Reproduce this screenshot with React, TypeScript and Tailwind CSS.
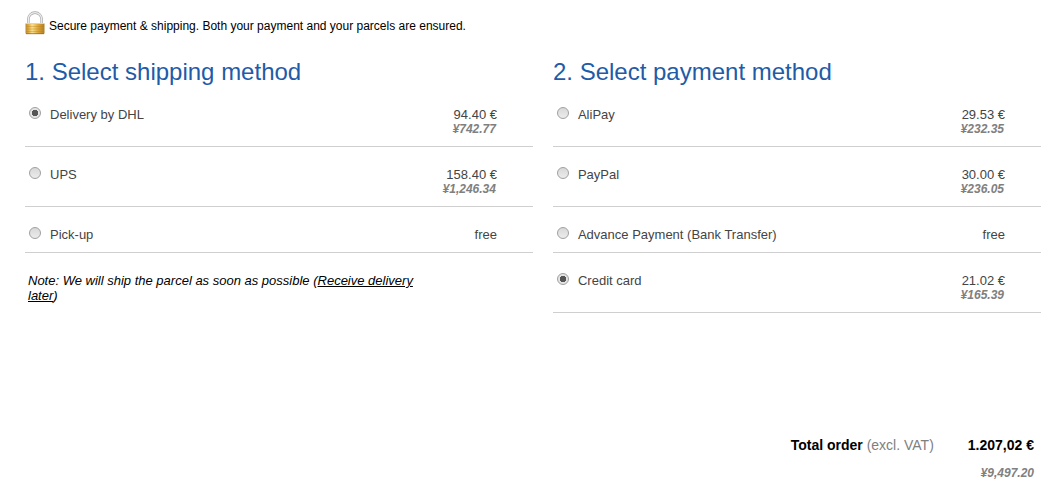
type Option = {
  id: string;
  label: string;
  price: string;
  converted?: string;
};

const shippingOptions: Option[] = [
  { id: "dhl", label: "Delivery by DHL", price: "94.40 €", converted: "¥742.77" },
  { id: "ups", label: "UPS", price: "158.40 €", converted: "¥1,246.34" },
  { id: "pickup", label: "Pick-up", price: "free" },
];

const paymentOptions: Option[] = [
  { id: "alipay", label: "AliPay", price: "29.53 €", converted: "¥232.35" },
  { id: "paypal", label: "PayPal", price: "30.00 €", converted: "¥236.05" },
  { id: "bank", label: "Advance Payment (Bank Transfer)", price: "free" },
  { id: "card", label: "Credit card", price: "21.02 €", converted: "¥165.39" },
];

function LockIcon() {
  return (
    <svg width="20" height="24" viewBox="0 0 20 24" className="shrink-0" aria-hidden="true">
      <defs>
        <linearGradient id="lock-body" x1="0" x2="1" y1="0" y2="0">
          <stop offset="0" stopColor="#b98a3a" />
          <stop offset="0.15" stopColor="#dba83c" />
          <stop offset="0.35" stopColor="#f8e08c" />
          <stop offset="0.65" stopColor="#e0a93a" />
          <stop offset="1" stopColor="#b07c26" />
        </linearGradient>
      </defs>
      <path d="M3.300 13V8.300a6.700 6.700 0 0 1 13.400 0V13" fill="none" stroke="#a6a6a6" strokeWidth="2.600" />
      <path d="M3.300 13V8.300a6.700 6.700 0 0 1 13.400 0V13" fill="none" stroke="#ededed" strokeWidth="1.300" />
      <rect x="0.500" y="12" width="19" height="11" rx="1" fill="url(#lock-body)" />
      <path d="M1 12.500h18" stroke="#f3d684" />
      <path d="M1 15.500h18M1 18h18M1 20.500h18" stroke="#b57b1e" strokeOpacity="0.350" />
      <path d="M1 22.700h18" stroke="#9a6a1c" strokeWidth="0.800" />
    </svg>
  );
}

function OptionList({ name, options, selected }: { name: string; options: Option[]; selected: string }) {
  return (
    <ul>
      {options.map((option) => (
        <li key={option.id} className="flex items-start border-b border-[#cfcfcf] pt-5 pr-9 pb-[10px] pl-1">
          <input
            type="radio"
            id={option.id}
            name={name}
            defaultChecked={option.id === selected}
            className="size-3 shrink-0 appearance-none rounded-full border border-[#a0a0a0] bg-linear-to-b from-[#d8d8d8] to-[#ececec] checked:bg-[radial-gradient(circle,#555_0_3px,#e4e4e4_3px)]"
          />
          <label htmlFor={option.id} className="flex-1 pl-[9px]">
            {option.label}
          </label>
          <div className="text-right">
            <div>{option.price}</div>
            {option.converted && (
              <div className="pr-px text-[12px] leading-[14px] font-bold text-[#808080] italic">{option.converted}</div>
            )}
          </div>
        </li>
      ))}
    </ul>
  );
}

export default function App() {
  return (
    <main className="bg-white pt-[11px] pr-[23px] pl-[25px] font-['Liberation_Sans',Arial,sans-serif] text-[13px] leading-[15px] text-[#444]">
      <div className="flex items-center gap-1 text-[12px] text-black">
        <LockIcon />
        <p className="pt-[6px]">Secure payment &amp; shipping. Both your payment and your parcels are ensured.</p>
      </div>

      <form>
        <div className="grid grid-cols-[51fr_49fr] gap-5 pt-[22px]">
          <section>
            <h2 className="text-[24px] leading-[30px] text-[#1f5ba8]">1. Select shipping method</h2>
            <OptionList name="shipping" options={shippingOptions} selected="dhl" />
            <p className="max-w-[400px] pt-5 pl-[3px] text-black italic">
              Note: We will ship the parcel as soon as possible (
              <a href="#later" className="underline">
                Receive delivery later
              </a>
              )
            </p>
          </section>

          <section>
            <h2 className="text-[24px] leading-[30px] text-[#1f5ba8]">2. Select payment method</h2>
            <OptionList name="payment" options={paymentOptions} selected="card" />
          </section>
        </div>

        <div className="flex justify-end gap-[34px] pt-[125px] pr-[7px] text-[14px]">
          <div className="text-[#808080]">
            <b className="text-black">Total order</b> (excl. VAT)
          </div>
          <div className="text-right">
            <div className="font-bold text-black">1.207,02 €</div>
            <div className="pt-[13px] text-[12px] font-bold text-[#808080] italic">¥9,497.20</div>
          </div>
        </div>
      </form>
    </main>
  );
}
